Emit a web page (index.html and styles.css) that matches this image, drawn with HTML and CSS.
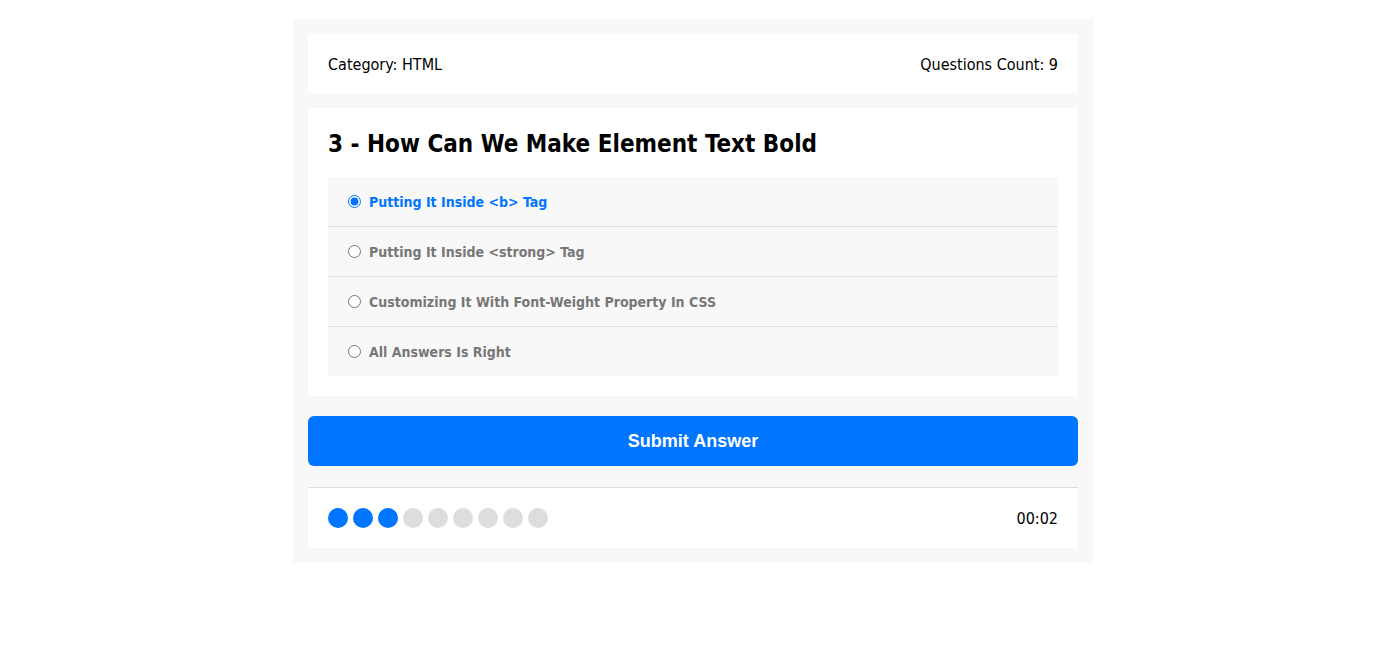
FILE: index.html
```html
<!DOCTYPE html>
<html lang="en">
<head>
<meta charset="utf-8">
<title>Quiz App</title>
<link rel="stylesheet" href="styles.css">
</head>
<body>
<div class="quiz-app">
  <div class="quiz-info">
    <div class="category">Category: <span>HTML</span></div>
    <div class="count">Questions Count: <span>9</span></div>
  </div>
  <div class="quiz-area">
    <h2>3 - How Can We Make Element Text Bold</h2>
    <div class="answers-area">
      <div class="answer">
        <input type="radio" name="question" id="answer_1" checked>
        <label for="answer_1">Putting It Inside &lt;b&gt; Tag</label>
      </div>
      <div class="answer">
        <input type="radio" name="question" id="answer_2">
        <label for="answer_2">Putting It Inside &lt;strong&gt; Tag</label>
      </div>
      <div class="answer">
        <input type="radio" name="question" id="answer_3">
        <label for="answer_3">Customizing It With Font-Weight Property In CSS</label>
      </div>
      <div class="answer">
        <input type="radio" name="question" id="answer_4">
        <label for="answer_4">All Answers Is Right</label>
      </div>
    </div>
  </div>
  <button class="submit-button">Submit Answer</button>
  <div class="bullets">
    <div class="spans">
      <span class="on"></span><span class="on"></span><span class="on"></span>
      <span></span><span></span><span></span><span></span><span></span><span></span>
    </div>
    <div class="countdown">00:02</div>
  </div>
</div>
</body>
</html>
```
FILE: styles.css
```css
* { box-sizing: border-box; }
body {
  margin: 0 5px 0 0;
  background: #fff;
  font-family: "DejaVu Sans Condensed", "DejaVu Sans", Tahoma, sans-serif;
}
.quiz-app {
  width: 800px;
  margin: 19px auto 0;
  background: #f8f8f8;
  padding: 15px;
}
.quiz-info {
  display: flex;
  justify-content: space-between;
  background: #fff;
  padding: 21px 20px 18px;
  font-size: 16px;
  line-height: 20px;
  color: #000;
}
.quiz-area {
  background: #fff;
  padding: 20px;
  margin-top: 15px;
}
.quiz-area h2 {
  margin: 0 0 17px;
  font-size: 24px;
  line-height: 32px;
  font-weight: bold;
}
.answers-area {
  background: #f8f8f8;
}
.answer {
  display: flex;
  align-items: center;
  padding: 15px;
  height: 50px;
  border-bottom: 1px solid #dfdfdf;
}
.answer:last-child { border-bottom: none; height: 49px; }
.answer input {
  margin: 0 3px 0 5px;
  width: 13px;
  height: 13px;
}
.answer label {
  margin-left: 5px;
  font-size: 14px;
  font-weight: bold;
  color: #777;
  cursor: pointer;
}
.answer input:checked + label { color: #0075ff; }
.submit-button {
  display: block;
  width: 100%;
  height: 50px;
  margin-top: 20px;
  border: none;
  border-radius: 6px;
  background: #0075ff;
  color: #fff;
  font-family: "Liberation Sans", Arial, sans-serif;
  font-size: 18px;
  font-weight: bold;
  cursor: pointer;
}
.bullets {
  display: flex;
  justify-content: space-between;
  align-items: center;
  margin-top: 21px;
  border-top: 1px solid #ddd;
  background: #fff;
  padding: 20px;
}
.spans { display: flex; gap: 5px; }
.spans span {
  width: 20px;
  height: 20px;
  border-radius: 50%;
  background: #ddd;
}
.spans span.on { background: #0075ff; }
.countdown { font-size: 16px; height: 20px; line-height: 22px; }
```
